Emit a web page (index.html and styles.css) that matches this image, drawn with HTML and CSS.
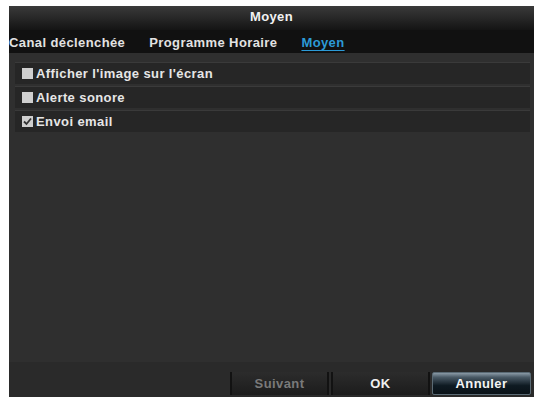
FILE: index.html
```html
<!DOCTYPE html>
<html>
<head>
<meta charset="utf-8">
<link rel="stylesheet" href="styles.css">
</head>
<body>
<div class="panel">
  <div class="title">Moyen</div>
  <div class="tabs">
    <span class="tab">Canal déclenchée</span>
    <span class="tab">Programme Horaire</span>
    <span class="tab active">Moyen</span>
  </div>
  <div class="content">
    <div class="row"><span class="box"></span>Afficher l'image sur l'écran</div>
    <div class="row"><span class="box"></span>Alerte sonore</div>
    <div class="row"><span class="box checked"><svg viewBox="0 0 11 11" width="11" height="11"><path d="M2 5.5 L4.5 8 L9 2.5" fill="none" stroke="#333" stroke-width="1.8"/></svg></span>Envoi email</div>
  </div>
  <div class="footer">
    <div class="btn disabled">Suivant</div>
    <div class="btn">OK</div>
    <div class="btn primary">Annuler</div>
  </div>
</div>
</body>
</html>
```
FILE: styles.css
```css
html, body {
  margin: 0;
  padding: 0;
  background: #ffffff;
}
body {
  font-family: "Liberation Sans", Arial, sans-serif;
  font-weight: bold;
  font-size: 13px;
  letter-spacing: 0.4px;
  color: #e6e6e6;
}
.panel {
  margin: 6px 0 0 9px;
  width: 525px;
  height: 391px;
  background: #2f2f2f;
  display: flex;
  flex-direction: column;
}
.title {
  height: 24px;
  line-height: 22px;
  text-align: center;
  color: #f2f2f2;
  background: linear-gradient(#3a3a3a, #141414);
}
.tabs {
  height: 23px;
  background: #111111;
  display: flex;
  align-items: center;
  gap: 24px;
  padding-top: 2px;
  box-sizing: border-box;
}
.tab {
  color: #e2e2e2;
}
.tab.active {
  color: #2c9ad6;
  text-decoration: underline;
  text-underline-offset: 3px;
}
.content {
  flex: 1;
  padding: 9px 4px 0 6px;
  display: flex;
  flex-direction: column;
  gap: 2px;
  background: #2f2f2f;
}
.row {
  height: 22px;
  background: #262626;
  border-top: 1px solid #3a3a3a;
  box-sizing: border-box;
  display: flex;
  align-items: center;
  padding-left: 7px;
  gap: 3px;
}
.box {
  width: 11px;
  height: 11px;
  background: #cfcfcf;
  display: inline-flex;
}
.footer {
  height: 33px;
  background: #2a2a2a;
  display: flex;
  justify-content: flex-end;
  align-items: flex-end;
  padding: 0 3px 2px 0;
  gap: 2px;
}
.btn {
  width: 99px;
  height: 23px;
  box-sizing: border-box;
  display: flex;
  align-items: center;
  justify-content: center;
  background: linear-gradient(#2c2c2c, #1c1c1c);
  border-left: 2px solid #121212;
  border-right: 2px solid #121212;
  color: #f0f0f0;
}
.btn.disabled {
  color: #7a7a7a;
}
.btn.primary {
  background: linear-gradient(#8a9aa6 0%, #4a5a66 20%, #0e1a22 60%, #0a1218 100%);
  border: 1px solid #5a6a74;
  border-radius: 2px;
  color: #f4f4f4;
}
```
